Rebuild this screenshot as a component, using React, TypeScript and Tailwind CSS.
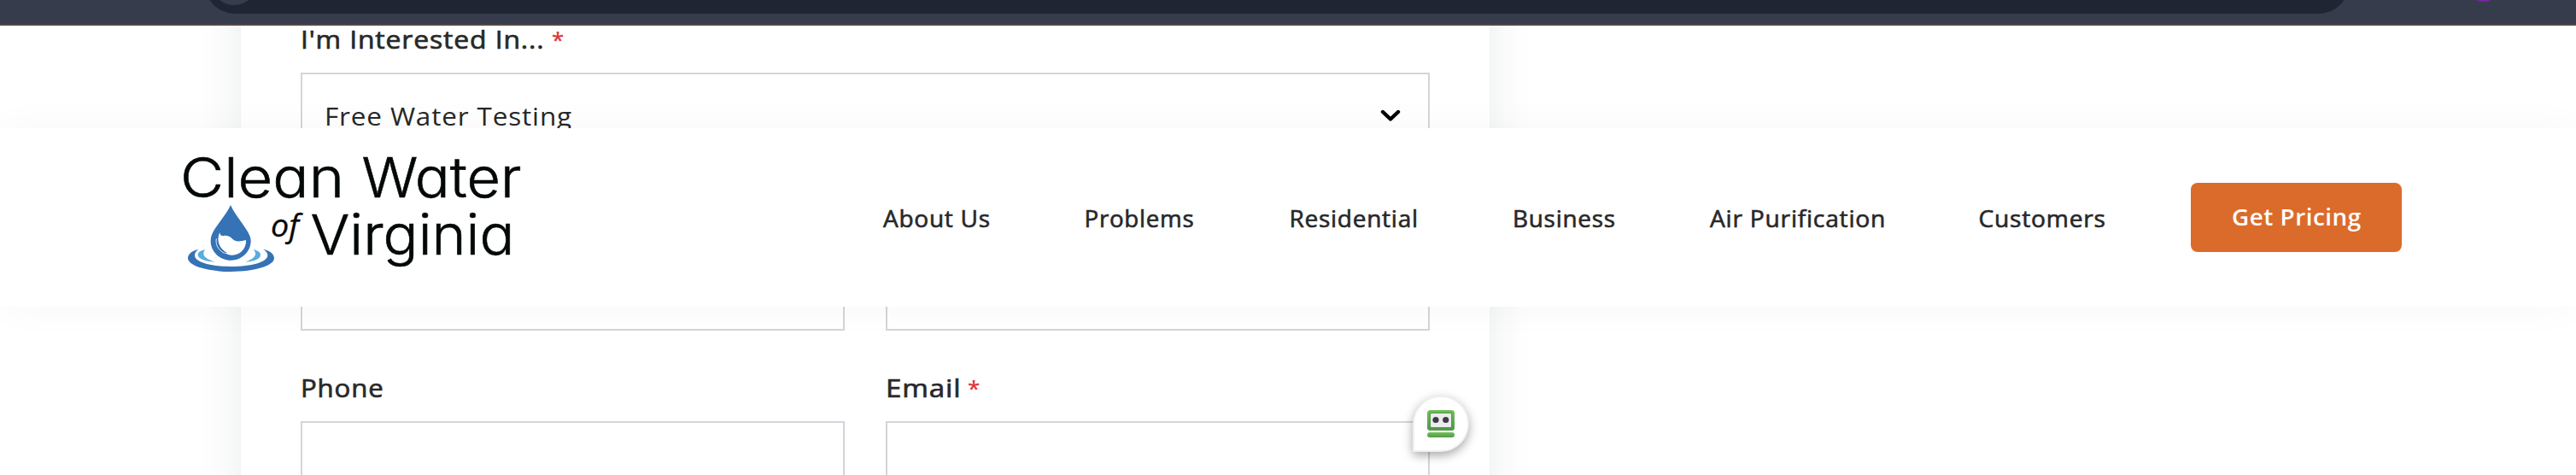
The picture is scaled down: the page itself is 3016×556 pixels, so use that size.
import React from "react";

const NAV = [
  { label: "About Us", box: "w-[124px] mr-[113px]", x: 0 },
  { label: "Problems", box: "w-[127px] mr-[113px]", x: -1.5 },
  { label: "Residential", box: "w-[149px] mr-[112px]", x: -1.5 },
  { label: "Business", box: "w-[119px] mr-[111px]", x: -1 },
  { label: "Air Purification", box: "w-[203px] mr-[112px]", x: 0 },
  { label: "Customers", box: "w-[147px] mr-[101px]", x: -0.5 },
];

function BrowserBar() {
  return (
    <div className="relative h-[30px] w-full shrink-0 overflow-hidden border-b-2 border-[#544848] bg-[#373c4c]">
      <div className="absolute left-[240px] top-[-54px] h-[70px] w-[2510px] rounded-full bg-[#202534]">
        <div className="absolute left-[7px] top-[6px] h-[54px] w-[54px] rounded-full bg-[#373c4c]" />
      </div>
      <div className="absolute left-[2887px] top-[-40px] h-[42px] w-[42px] rounded-full bg-[#7327a0]" />
    </div>
  );
}

function Logo() {
  return (
    <svg className="h-[180px] w-[450px] shrink-0" viewBox="0 0 450 180" role="img" aria-label="Clean Water of Virginia">
      <g fill="#050808" fontFamily="Inter, sans-serif" fontSize="65" fontWeight="300" stroke="#050808" strokeWidth="0.6" style={{ fontFeatureSettings: '"cv11"' }}>
        <text x="21" y="71" textLength="192" lengthAdjust="spacingAndGlyphs">Clean</text>
        <text x="233.5" y="71" textLength="187" lengthAdjust="spacingAndGlyphs">Water</text>
        <text x="173.5" y="137.7" textLength="239" lengthAdjust="spacingAndGlyphs">Virginia</text>
      </g>
      <text x="127" y="117" fill="#050808" stroke="#050808" strokeWidth="0.3" fontFamily="'Open Sans', sans-serif" fontStyle="italic" fontSize="37" textLength="33" lengthAdjust="spacingAndGlyphs">of</text>
      <g transform="scale(0.33333)">
        <path fill="#3572b6" d="M127 396C105 400 90 412 90 427C90 453 158 474 241 474C325 474 393 453 393 427C393 412 378 400 355 396C365 402 370 409 370 417C370 440 312 456 241 456C170 456 114 440 114 417C114 409 118 402 127 396Z" />
        <path fill="#57ace0" d="M151 396C134 400 125 406 125 415C125 429 152 439 187 440C160 432 145 423 145 411C145 405 147 400 151 396Z" />
        <path fill="#57ace0" d="M319 396C336 400 345 406 345 415C345 429 325 439 290 440C315 432 327 423 327 411C327 405 324 400 319 396Z" />
        <path fill="#3572b6" d="M240 240C252 268 276 296 294 324C304 340 311 352 311 366C311 404 279 434 241 434C202 434 170 404 170 366C170 350 176 338 186 322C204 294 228 268 240 240Z" />
        <path fill="#fff" d="M202 337C203 347 208 349 215 348C228 346 238 350 245 358C260 373 276 366 294 363C296 393 273 416 246 416C234 416 221 411 212 404C224 410 229 408 227 407C205 396 194 374 197 353C198 346 200 341 202 337Z" />
        <path fill="none" stroke="#fff" strokeWidth="2.5" d="M190 358C186 378 196 398 218 409" />
      </g>
    </svg>
  );
}

function Header() {
  return (
    <header className="absolute inset-x-0 top-[150px] z-10 flex h-[209px] items-start bg-white pl-[190px] shadow-[0_0_44px_rgba(0,0,0,0.035)]">
      <div className="pt-[10px]">
        <Logo />
      </div>
      <nav className="ml-[394px] flex items-start pt-[64px]">
        {NAV.map((n) => (
          <a key={n.label} className={`block h-[81px] shrink-0 ${n.box}`}>
            <svg className="h-[81px] w-full overflow-visible">
              <text x={n.x} y="52" fill="#272829" stroke="#272829" strokeWidth="0.6" letterSpacing="0.7" fontFamily="'Open Sans', sans-serif" fontSize="26.5" textLength="101.5%" lengthAdjust="spacingAndGlyphs">{n.label}</text>
            </svg>
          </a>
        ))}
        <a className="flex h-[81px] w-[247px] items-center justify-center rounded-[8px] bg-[#db6b2b]">
          <svg className="h-[81px] w-[151px] overflow-visible">
            <text x="0" y="50" fill="#fff" letterSpacing="0.5" fontFamily="'Open Sans', sans-serif" fontSize="26.5" fontWeight="600" textLength="100.5%" lengthAdjust="spacingAndGlyphs">Get Pricing</text>
          </svg>
        </a>
      </nav>
    </header>
  );
}

function Label({ text, box, required }: { text: string; box: string; required?: boolean }) {
  return (
    <div className="flex h-[50px]">
      <svg className={`h-[50px] shrink-0 overflow-visible ${box}`}>
        <text x="0" y="36" fill="#272829" stroke="#272829" strokeWidth="0.7" letterSpacing="0.8" fontFamily="'Open Sans', sans-serif" fontSize="30" textLength="99.5%" lengthAdjust="spacingAndGlyphs">{text}</text>
      </svg>
      {required && <span className="ml-[7px] pt-[8px] font-['Open_Sans',sans-serif] text-[26px] font-semibold leading-[34px] text-[#dc3a40]">*</span>}
    </div>
  );
}

function Robot() {
  return (
    <svg className="h-8 w-8" viewBox="0 0 32 32">
      <defs>
        <linearGradient id="face" x1="0" y1="0" x2="0" y2="1">
          <stop offset="0" stopColor="#74c25c" />
          <stop offset="1" stopColor="#51994a" />
        </linearGradient>
      </defs>
      <rect width="32" height="24" rx="3.5" fill="url(#face)" />
      <rect x="2.5" y="2.5" width="27" height="19" rx="1.5" fill="#4f9444" opacity="0.6" />
      <rect x="4" y="4" width="24" height="16" rx="1" fill="#ebebed" />
      <circle cx="10" cy="11.5" r="3.6" fill="#393b44" />
      <circle cx="21.7" cy="11.5" r="3.6" fill="#393b44" />
      <rect y="26" width="32" height="6" rx="3" fill="url(#face)" />
    </svg>
  );
}

export default function App() {
  return (
    <div className="relative flex h-[556px] w-[3016px] flex-col overflow-hidden bg-white">
      <BrowserBar />
      <main className="h-[526px] overflow-hidden">
        <form className="-mt-[60px] ml-[282px] h-[720px] w-[1462px] bg-white px-[70px] pt-[51px] shadow-[0_0_50px_rgba(20,60,50,0.09)]">
          <Label text="I'm Interested In..." box="w-[287px]" required />
          <div className="mt-[14px] flex h-[118px] justify-between border-2 border-[#d2d6da] pl-[26px] pr-[32px]">
            <svg className="h-[110px] w-[290px] overflow-visible">
              <text x="0" y="59.5" fill="#272829" letterSpacing="0.8" fontFamily="'Open Sans', sans-serif" fontSize="30" textLength="100%" lengthAdjust="spacingAndGlyphs">Free Water Testing</text>
            </svg>
            <svg className="mt-[40px] h-[16px] w-[24px]" viewBox="0 0 24 16">
              <path d="M3 4L12 12.5L21 4" fill="none" stroke="#000" strokeWidth="4.4" strokeLinecap="round" strokeLinejoin="round" />
            </svg>
          </div>
          <div className="mt-[66px] grid grid-cols-2 gap-x-12">
            <div className="h-[118px] border-2 border-[#d2d6da]" />
            <div className="h-[118px] border-2 border-[#d2d6da]" />
            <div className="mt-[42px]">
              <Label text="Phone" box="w-[98px]" />
              <div className="mt-[14px] h-[118px] border-2 border-[#d2d6da]" />
            </div>
            <div className="mt-[42px]">
              <Label text="Email" box="w-[89px]" required />
              <div className="mt-[14px] h-[118px] border-2 border-[#d2d6da]" />
            </div>
          </div>
        </form>
      </main>
      <Header />
      <button className="absolute left-[1654px] top-[463px] z-20 flex h-[66px] w-[66px] items-center justify-center rounded-full rounded-bl-none border-2 border-[#f0f0f0] bg-white shadow-[0_4px_12px_rgba(0,0,0,0.35)]">
        <Robot />
      </button>
    </div>
  );
}
